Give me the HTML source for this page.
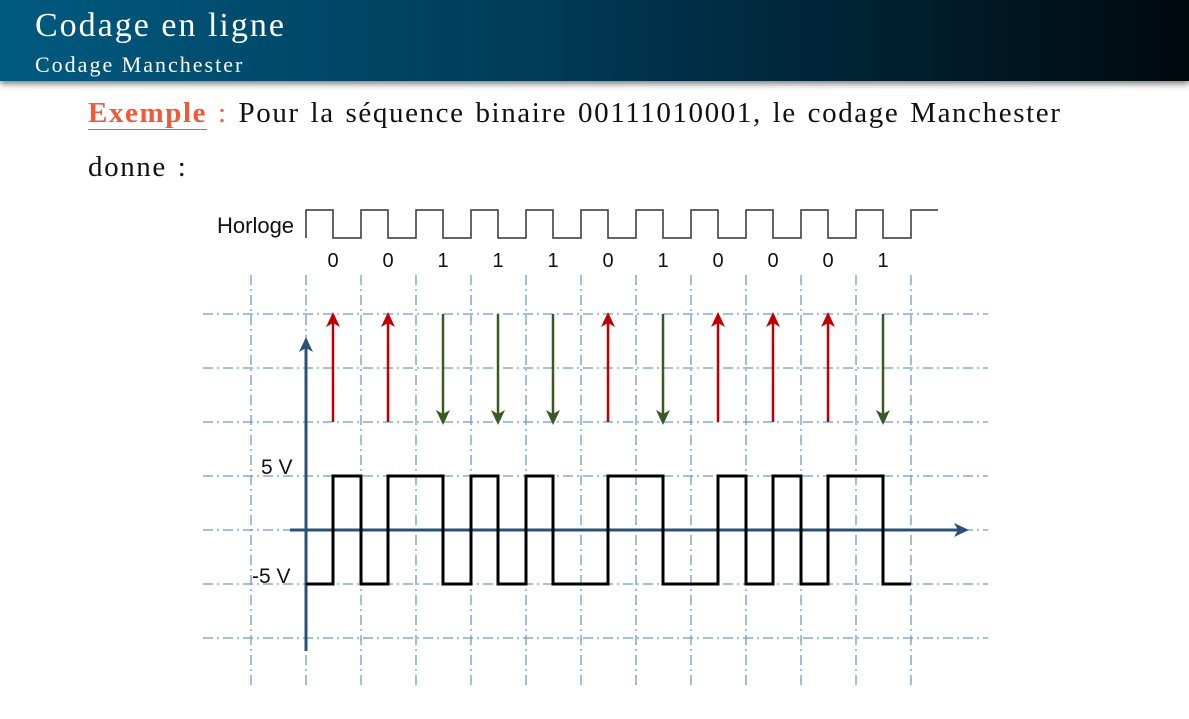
<!DOCTYPE html>
<html><head><meta charset="utf-8"><style>
html,body{margin:0;padding:0;width:1189px;height:719px;background:#fff;overflow:hidden;font-family:"Liberation Serif",serif}
.hdr{position:absolute;left:0;top:0;width:1189px;height:81px;background:linear-gradient(90deg,#005a80 0%,#003b58 45%,#00090e 100%);box-shadow:0 3px 6px rgba(0,0,0,.5)}
.t1{position:absolute;left:35px;top:7px;color:#fff;font-size:34px;letter-spacing:2px;white-space:nowrap}
.t2{position:absolute;left:35px;top:52px;color:#fff;font-size:22px;letter-spacing:2px;white-space:nowrap}
.p{position:absolute;left:88px;font-size:29px;color:#111;letter-spacing:1.6px;word-spacing:2px;white-space:nowrap}
.ex{color:#f05a3a;font-weight:bold;border-bottom:1.5px solid #f05a3a}
</style></head><body>
<div class="hdr"><div class="t1">Codage en ligne</div><div class="t2">Codage Manchester</div></div>
<div class="p" style="top:97px"><span class="ex">Exemple</span><span style="color:#f05a3a"> :</span> Pour la séquence binaire 00111010001, le codage Manchester</div>
<div class="p" style="top:151px">donne :</div>
<svg width="1189" height="719" style="position:absolute;left:0;top:0" font-family="Liberation Sans,sans-serif">
<g stroke="#6a9ccc" stroke-width="1.3" stroke-dasharray="10,4,2,4" fill="none">
<path d="M203 314H988M203 368H988M203 422H988M203 476H988M203 530H988M203 584H988M203 638H988"/>
<path d="M251 275V685M306 275V685M361 275V685M416 275V685M471 275V685M526 275V685M581 275V685M636 275V685M691 275V685M746 275V685M801 275V685M856 275V685M911 275V685"/>
</g>
<path d="M306 238V210H333V238H361V210H388V238H416V210H443V238H471V210H498V238H526V210H553V238H581V210H608V238H636V210H663V238H691V210H718V238H746V210H773V238H801V210H828V238H856V210H883V238H911V210H938" stroke="#333" stroke-width="1.5" fill="none"/>
<text x="217" y="233" font-size="22" fill="#111">Horloge</text>
<g font-size="20" fill="#111" text-anchor="middle">
<text x="333" y="267">0</text><text x="388" y="267">0</text><text x="443" y="267">1</text><text x="498" y="267">1</text><text x="553" y="267">1</text><text x="608" y="267">0</text><text x="663" y="267">1</text><text x="718" y="267">0</text><text x="773" y="267">0</text><text x="828" y="267">0</text><text x="883" y="267">1</text>
</g>
<g stroke="#c00000" stroke-width="2.5" fill="#c00000">
<path d="M333 422V318M388 422V318M608 422V318M718 422V318M773 422V318M828 422V318"/>
</g>
<g fill="#c00000"><path d="M333 312l-7 15l7-4l7 4z"/><path d="M388 312l-7 15l7-4l7 4z"/><path d="M608 312l-7 15l7-4l7 4z"/><path d="M718 312l-7 15l7-4l7 4z"/><path d="M773 312l-7 15l7-4l7 4z"/><path d="M828 312l-7 15l7-4l7 4z"/></g>
<g stroke="#3a5a24" stroke-width="2.5"><path d="M443 314V418M498 314V418M553 314V418M663 314V418M883 314V418"/></g>
<g fill="#3a5a24"><path d="M443 425l-7-15l7 4l7-4z"/><path d="M498 425l-7-15l7 4l7-4z"/><path d="M553 425l-7-15l7 4l7-4z"/><path d="M663 425l-7-15l7 4l7-4z"/><path d="M883 425l-7-15l7 4l7-4z"/></g>
<g stroke="#2c5178" stroke-width="3"><path d="M306 651V344M290 530H962"/></g>
<g fill="#2c5178"><path d="M306 337l-7 15l7-4l7 4z"/><path d="M969 530l-15-7l4 7l-4 7z"/></g>
<path d="M306 584H333V476H361V584H388V476H443V584H471V476H498V584H526V476H553V584H608V476H663V584H718V476H746V584H773V476H801V584H828V476H883V584H911" stroke="#000" stroke-width="3" fill="none"/>
<text x="261" y="474" font-size="21" fill="#111">5 V</text>
<text x="252" y="583" font-size="21" fill="#111">-5 V</text>
</svg>
</body></html>
